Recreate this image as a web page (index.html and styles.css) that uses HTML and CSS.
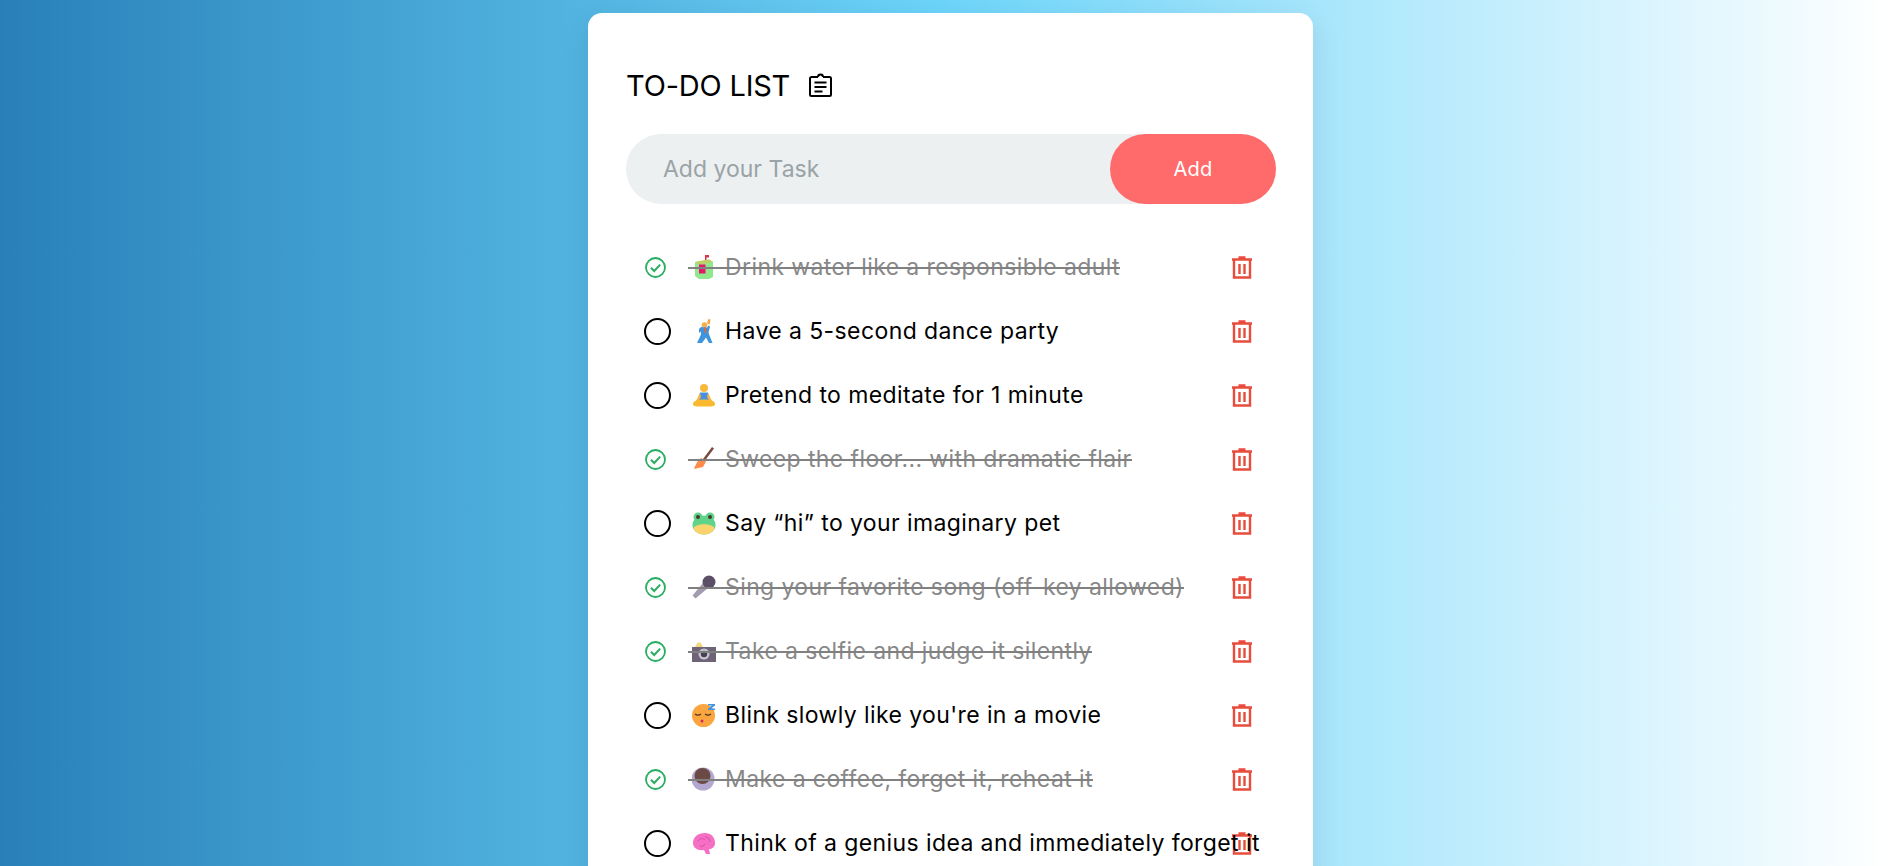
FILE: index.html
```html
<!DOCTYPE html>
<html lang="en">
<head>
    <meta charset="UTF-8">
    <title>To-Do List</title>
    <link rel="stylesheet" href="styles.css">
</head>
<body>

<svg class="sprites" width="0" height="0">
    <symbol id="trash" viewBox="0 0 20 23">
        <path d="M6.500 1.500h7M0 3.500h20" fill="none" stroke="currentColor" stroke-width="2.400"/>
        <path d="M2 4v17.500h16V4M7.500 8v10M12.500 8v10" fill="none" stroke="currentColor" stroke-width="2.400"/>
    </symbol>
    <symbol id="check" viewBox="0 0 21 21">
        <circle cx="10.500" cy="10.500" r="9.500" fill="none" stroke="currentColor" stroke-width="1.800"/>
        <path d="M6 10.800l3.200 3.200 6-6.400" fill="none" stroke="currentColor" stroke-width="2"/>
    </symbol>
</svg>

<div class="page">
    <div class="card">
        <h1 class="title">
            TO-DO LIST
            <svg class="title-icon" viewBox="0 0 23 24" width="23" height="24">
                <path d="M9 4H2.500A1.500 1.500 0 0 0 1 5.500V21.500A1.500 1.500 0 0 0 2.500 23H20.500A1.500 1.500 0 0 0 22 21.500V5.500A1.500 1.500 0 0 0 20.500 4H14" fill="none" stroke="#000" stroke-width="2"/>
                <path d="M9 4A2.500 2.500 0 0 1 14 4" fill="none" stroke="#000" stroke-width="2"/>
                <path d="M5.500 9.500H17.500M5.500 14H17.500M5.500 18.500H13.500" fill="none" stroke="#000" stroke-width="2"/>
            </svg>
        </h1>

        <div class="add-row">
            <input class="add-input" type="text" placeholder="Add your Task">
            <button class="add-btn">Add</button>
        </div>

        <ul class="tasks">
            <li class="task done">
                <svg class="check" width="21" height="21"><use href="#check"/></svg>
                <span class="task-text">
                    <svg class="emoji" viewBox="0 0 24 24">
                        <path d="M13 0h4v2.500h-2.500V5H13z" fill="#d8344a"/>
                        <path d="M3 7l14-2.500 4 2.500v15l-4 2H7l-4-3z" fill="#8fe88c"/>
                        <path d="M3 7l14-2.500 4 2.500-14 2.500z" fill="#c3cf62"/>
                        <path d="M7 9.500h6.500v9H7z" fill="#e7156b"/>
                    </svg>Drink water like a responsible adult
                </span>
                <svg class="trash" width="20" height="23"><use href="#trash"/></svg>
            </li>
            <li class="task">
                <span class="radio"></span>
                <span class="task-text">
                    <svg class="emoji" viewBox="0 0 24 24">
                        <circle cx="12.500" cy="6" r="2.800" fill="#f4b04a"/>
                        <path d="M15 4l1.500-4 2 .5L17.500 6z" fill="#f4a640"/>
                        <path d="M7 10l2-2 6 .5 1.500-2 1.500 1-1.500 6 1 3 3 7.500h-3.500l-3-5.500-4 5.500H5l4-8.500v-3L7 14z" fill="#3f94e0"/>
                        <path d="M12 8.500h2l.5 5-1.500 1z" fill="#e5642f"/>
                    </svg>Have a 5-second dance party
                </span>
                <svg class="trash" width="20" height="23"><use href="#trash"/></svg>
            </li>
            <li class="task">
                <span class="radio"></span>
                <span class="task-text">
                    <svg class="emoji" viewBox="0 0 24 24">
                        <circle cx="12" cy="5" r="4" fill="#f8b83e"/>
                        <path d="M8 9.500h8l2 8H6z" fill="#4a90e2"/>
                        <path d="M8 9.500L4 18l2 1 3-5zM16 9.500l4 8.500-2 1-3-5z" fill="#f8b83e"/>
                        <path d="M1 21c0-3 4-4.500 11-4.500S23 18 23 21s-4 2.500-11 2.500S1 24 1 21z" fill="#fbb92f"/>
                    </svg>Pretend to meditate for 1 minute
                </span>
                <svg class="trash" width="20" height="23"><use href="#trash"/></svg>
            </li>
            <li class="task done">
                <svg class="check" width="21" height="21"><use href="#check"/></svg>
                <span class="task-text">
                    <svg class="emoji" viewBox="0 0 24 24">
                        <path d="M20 0l2 1.500-9 12-2-1.500z" fill="#7a4a3e"/>
                        <path d="M9 11l5 3.500-3 5.500-9 2c1-3 3-8 7-11z" fill="#ff8a4a"/>
                    </svg>Sweep the floor... with dramatic flair
                </span>
                <svg class="trash" width="20" height="23"><use href="#trash"/></svg>
            </li>
            <li class="task">
                <span class="radio"></span>
                <span class="task-text">
                    <svg class="emoji" viewBox="0 0 24 24">
                        <ellipse cx="12" cy="14" rx="11.500" ry="9.500" fill="#5fd38a"/>
                        <path d="M1.500 17c3-5 18-5 21 0-1 4-5 6.500-10.500 6.500S2.500 21 1.500 17z" fill="#f8d36e"/>
                        <circle cx="6" cy="6" r="4.500" fill="#5fd38a"/>
                        <circle cx="18" cy="6" r="4.500" fill="#5fd38a"/>
                        <circle cx="6" cy="6" r="2" fill="#4a3a2c"/>
                        <circle cx="18" cy="6" r="2" fill="#4a3a2c"/>
                    </svg>Say “hi” to your imaginary pet
                </span>
                <svg class="trash" width="20" height="23"><use href="#trash"/></svg>
            </li>
            <li class="task done">
                <svg class="check" width="21" height="21"><use href="#check"/></svg>
                <span class="task-text">
                    <svg class="emoji" viewBox="0 0 24 24">
                        <path d="M11 8l5 5L3.500 23.500l-3-3z" fill="#a39cae"/>
                        <circle cx="17" cy="7" r="6.500" fill="#5a4f66"/>
                    </svg>Sing your favorite song (off-key allowed)
                </span>
                <svg class="trash" width="20" height="23"><use href="#trash"/></svg>
            </li>
            <li class="task done">
                <svg class="check" width="21" height="21"><use href="#check"/></svg>
                <span class="task-text">
                    <svg class="emoji" viewBox="0 0 24 24">
                        <path d="M3 8l2.500-4.500h3L11 8z" fill="#f4d77a"/>
                        <path d="M0 8h24v15H0z" fill="#6d6478"/>
                        <circle cx="12" cy="15" r="5.500" fill="#c9c4d1"/>
                        <circle cx="12" cy="15" r="3.200" fill="#45404e"/>
                    </svg>Take a selfie and judge it silently
                </span>
                <svg class="trash" width="20" height="23"><use href="#trash"/></svg>
            </li>
            <li class="task">
                <span class="radio"></span>
                <span class="task-text">
                    <svg class="emoji" viewBox="0 0 24 24">
                        <circle cx="11.500" cy="12.500" r="11.500" fill="#fba53e"/>
                        <path d="M3 11c2 1.500 4 1.500 6 0M13 11c2 1.500 4 1.500 6 0" fill="none" stroke="#4a3428" stroke-width="1.200"/>
                        <circle cx="10" cy="18" r="1.500" fill="#d8246b"/>
                        <path d="M16 1h7v1.500l-4 3h4V7h-7V5.500l4-3h-4z" fill="#3f94e0"/>
                    </svg>Blink slowly like you're in a movie
                </span>
                <svg class="trash" width="20" height="23"><use href="#trash"/></svg>
            </li>
            <li class="task done">
                <svg class="check" width="21" height="21"><use href="#check"/></svg>
                <span class="task-text">
                    <svg class="emoji" viewBox="0 0 24 24">
                        <circle cx="11" cy="12" r="11.500" fill="#b3a7cf"/>
                        <circle cx="10.500" cy="9" r="8" fill="#6b4a45"/>
                    </svg>Make a coffee, forget it, reheat it
                </span>
                <svg class="trash" width="20" height="23"><use href="#trash"/></svg>
            </li>
            <li class="task">
                <span class="radio"></span>
                <span class="task-text">
                    <svg class="emoji" viewBox="0 0 24 24">
                        <path d="M1 12C1 6 6 2 13 2c6 0 10 4 10 10 0 4-3 6-6 6l1 5h-4l-2-4c-6 1-11-2-11-7z" fill="#f56fc4"/>
                        <path d="M6 10c2-3 5-3 7-1M13 6c3 0 5 2 5 5M8 15c2 1 4 0 5-2" fill="none" stroke="#d84fa5" stroke-width="1"/>
                    </svg>Think of a genius idea and immediately forget it
                </span>
                <svg class="trash" width="20" height="23"><use href="#trash"/></svg>
            </li>
        </ul>
    </div>
</div>

</body>
</html>
```

FILE: styles.css
```css
html, body {
    margin: 0;
    height: 100%;
    overflow: hidden;
}
body {
    font-family: Inter, "Liberation Sans", sans-serif;
    background: linear-gradient(to right, #2980b9, #6dd5fa, #ffffff);
}
.sprites {
    display: block;
}
.page {
    padding: 13px 0 0 13px;
    display: flex;
    justify-content: center;
}
.card {
    width: 725px;
    box-sizing: border-box;
    padding: 50px 37px 40px 38px;
    background: #fff;
    border-radius: 14px;
    box-shadow: 0 10px 30px rgba(0, 0, 0, 0.1);
}
.title {
    margin: 0 0 27px;
    display: flex;
    align-items: center;
    gap: 19px;
    height: 44px;
    font-size: 29px;
    font-weight: 400;
    letter-spacing: -0.2px;
    color: #000;
}
.add-row {
    display: flex;
    height: 70px;
    background: #ecf0f1;
    border-radius: 35px;
    margin-bottom: 31px;
}
.add-input {
    flex: 1;
    min-width: 0;
    padding: 0 0 0 37px;
    border: none;
    outline: none;
    background: transparent;
    font-family: inherit;
    font-size: 23px;
}
.add-input::placeholder {
    color: #9aa3a6;
}
.add-btn {
    width: 166px;
    border: none;
    border-radius: 35px;
    background: #ff6b6b;
    color: #fff;
    font-family: inherit;
    font-size: 20px;
    letter-spacing: 0.3px;
    cursor: pointer;
}
.tasks {
    list-style: none;
    margin: 0;
    padding: 0;
}
.task {
    display: flex;
    align-items: center;
    height: 64px;
    padding: 0 24px 0 18px;
    font-size: 23px;
    letter-spacing: 0.4px;
    color: #000;
}
.radio {
    width: 27px;
    height: 27px;
    box-sizing: border-box;
    flex: none;
    border: 2px solid #000;
    border-radius: 50%;
    margin-right: 17px;
}
.check {
    flex: none;
    color: #27ae60;
    margin: 0 22px 0 1px;
}
.task-text {
    position: relative;
    flex: 1;
    min-width: 0;
    white-space: nowrap;
    z-index: 1;
}
.done .task-text {
    color: #888;
    flex: 0 0 auto;
    margin-right: auto;
}
.done .task-text::after {
    content: "";
    position: absolute;
    left: 0;
    right: 0;
    top: 50%;
    height: 2px;
    background: #808080;
}
.emoji {
    width: 24px;
    height: 24px;
    margin: 0 9px 0 4px;
    vertical-align: -4px;
}
.trash {
    flex: none;
    color: #e74c3c;
}
```
